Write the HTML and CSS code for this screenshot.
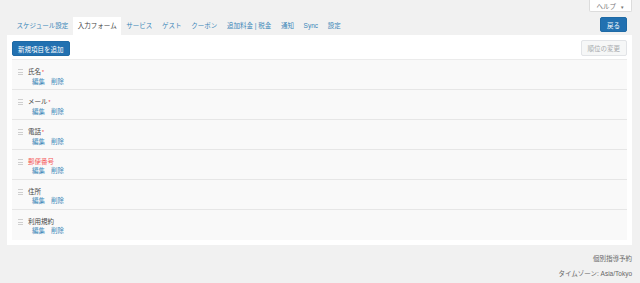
FILE: index.html
```html
<!DOCTYPE html>
<html lang="ja">
<head>
    <meta charset="UTF-8">
    <meta name="viewport" content="width=device-width, initial-scale=1.0">
    <title>入力フォーム</title>
    <link rel="stylesheet" href="styles.css">
</head>
<body>
    <div class="wrap">
        <div class="help-row">
            <button class="help-btn">ヘルプ <span class="caret">▼</span></button>
        </div>

        <div class="tab-row">
            <nav class="tabs">
                <a class="tab">スケジュール設定</a>
                <a class="tab active">入力フォーム</a>
                <a class="tab">サービス</a>
                <a class="tab">ゲスト</a>
                <a class="tab">クーポン</a>
                <a class="tab">追加料金 | 税金</a>
                <a class="tab">通知</a>
                <a class="tab">Sync</a>
                <a class="tab">設定</a>
            </nav>
            <button class="btn btn-blue">戻る</button>
        </div>

        <div class="panel">
            <div class="toolbar">
                <button class="btn btn-blue">新規項目を追加</button>
                <button class="btn btn-disabled">順位の変更</button>
            </div>

            <ul class="fields">
                <li class="field">
                    <span class="handle"></span>
                    <div>
                        <div class="name">氏名<span class="req">*</span></div>
                        <div class="actions"><a>編集</a><a>削除</a></div>
                    </div>
                </li>
                <li class="field">
                    <span class="handle"></span>
                    <div>
                        <div class="name">メール<span class="req">*</span></div>
                        <div class="actions"><a>編集</a><a>削除</a></div>
                    </div>
                </li>
                <li class="field">
                    <span class="handle"></span>
                    <div>
                        <div class="name">電話<span class="req">*</span></div>
                        <div class="actions"><a>編集</a><a>削除</a></div>
                    </div>
                </li>
                <li class="field">
                    <span class="handle"></span>
                    <div>
                        <div class="name error">郵便番号</div>
                        <div class="actions"><a>編集</a><a>削除</a></div>
                    </div>
                </li>
                <li class="field">
                    <span class="handle"></span>
                    <div>
                        <div class="name">住所</div>
                        <div class="actions"><a>編集</a><a>削除</a></div>
                    </div>
                </li>
                <li class="field">
                    <span class="handle"></span>
                    <div>
                        <div class="name">利用規約</div>
                        <div class="actions"><a>編集</a><a>削除</a></div>
                    </div>
                </li>
            </ul>
        </div>

        <div class="footer">
            <div>個別指導予約</div>
            <div>タイムゾーン: Asia/Tokyo</div>
        </div>
    </div>
</body>
</html>
```

FILE: styles.css
```css
body {
    margin: 0;
    background-color: #f1f1f1;
    font-family: "Liberation Sans", "Noto Sans CJK JP", sans-serif;
    font-size: 6.5px;
    color: #444;
}
.wrap {
    padding: 0 8px 0 7px;
}
.help-row {
    display: flex;
    justify-content: flex-end;
    height: 17px;
}
.help-btn {
    height: 12px;
    width: 43px;
    padding: 0;
    font: inherit;
    color: #777;
    background-color: #fff;
    border: 1px solid #dcdcdc;
    border-top: none;
    border-radius: 0 0 2px 2px;
}
.caret {
    font-size: 4.5px;
    margin-left: 2px;
}
.tab-row {
    display: flex;
    justify-content: space-between;
    align-items: flex-start;
    height: 18px;
}
.tabs {
    display: flex;
    padding-left: 5px;
}
.tab {
    padding: 0 4.6px;
    margin-right: 0.5px;
    height: 18px;
    line-height: 18px;
    color: #3a86b8;
}
.tab.active {
    background-color: #fff;
    color: #444;
}
.btn {
    font: inherit;
    height: 15px;
    padding: 0 6px;
    border-radius: 2px;
    cursor: pointer;
}
.tab-row .btn {
    margin-right: 5px;
}
.btn-blue {
    background-color: #2271b1;
    border: 1px solid #1f6aa5;
    color: #fff;
}
.toolbar .btn-blue {
    padding: 0 5px;
    margin-top: 1px;
}
.btn-disabled {
    background-color: #f6f7f7;
    border: 1px solid #e2e4e7;
    color: #a7aaad;
    height: 16px;
}
.panel {
    background-color: #fff;
    padding: 5px;
}
.toolbar {
    display: flex;
    justify-content: space-between;
    align-items: flex-start;
    margin-bottom: 3px;
}
.fields {
    list-style: none;
    margin: 0;
    padding: 0;
    background-color: #f9f9f9;
    border-top: 1px solid #ebebeb;
}
.field {
    display: flex;
    height: 30px;
    padding: 7px 0 0 6px;
    box-sizing: border-box;
    border-bottom: 1px solid #e6e6e6;
}
.field:last-child {
    border-bottom: none;
}
.handle {
    width: 5px;
    height: 4px;
    margin: 2px 5px 0 0;
    border-top: 1px solid #cfcfcf;
    border-bottom: 1px solid #cfcfcf;
    position: relative;
}
.handle::after {
    content: "";
    position: absolute;
    left: 0;
    right: 0;
    top: 1.5px;
    border-top: 1px solid #cfcfcf;
}
.name {
    line-height: 9px;
    color: #444;
}
.name.error {
    color: #f55a5a;
}
.req {
    color: #e33;
    margin-left: 1px;
    font-size: 5px;
}
.actions {
    line-height: 10px;
    padding-left: 4px;
}
.actions a {
    color: #3a86b8;
    margin-right: 6px;
}
.footer {
    text-align: right;
    color: #666;
    padding-top: 6px;
    line-height: 15px;
}
```
